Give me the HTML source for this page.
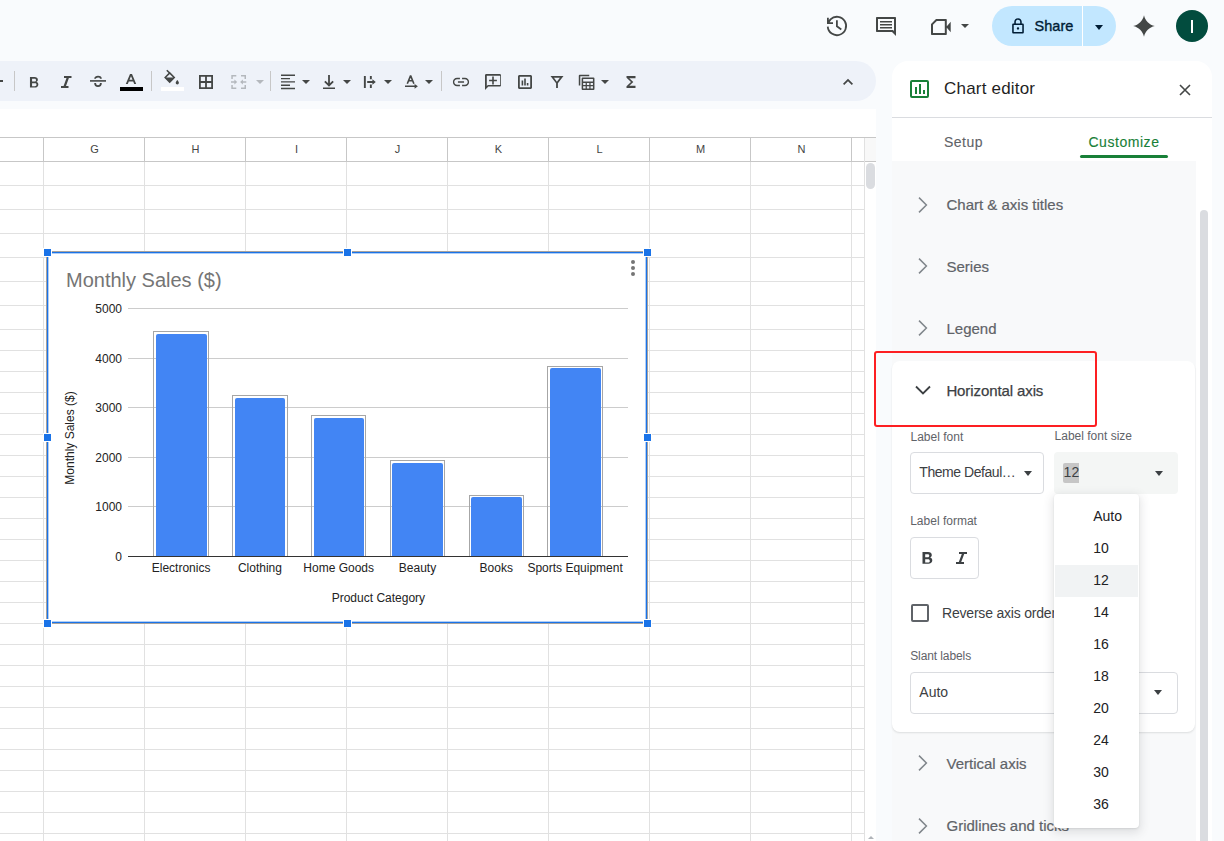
<!DOCTYPE html>
<html><head><meta charset="utf-8">
<style>
*{box-sizing:border-box;margin:0;padding:0}
html,body{width:1224px;height:841px;overflow:hidden;background:#f9fbfd;font-family:"Liberation Sans",sans-serif;position:relative}
.a{position:absolute}
svg.ic{position:absolute;fill:#444746}
.sep{position:absolute;top:71px;width:1px;height:20px;background:#c7c7c7}
.dd{position:absolute;width:0;height:0;border-left:4px solid transparent;border-right:4px solid transparent;border-top:4px solid #444746}
#toolbar{left:-30px;top:61px;width:906px;height:40px;background:#eef2f9;border-radius:20px}
#sheet{left:0;top:109px;width:876px;height:732px;background:#fff;overflow:hidden}
.hl{position:absolute;height:1px;background:#e1e1e1}
.vl{position:absolute;width:1px;background:#e1e1e1}
.colh{position:absolute;top:137px;height:24px;width:101px;font-size:11px;color:#444;text-align:center;line-height:25px}
#panel{left:892px;top:61px;width:320px;height:800px;background:#fff;border-radius:16px 16px 0 0;overflow:hidden}
.ct{position:absolute;font-size:12px;color:#222;white-space:nowrap;line-height:14px}
.acc{position:absolute;left:946px;font-size:15px;color:#5f6368;white-space:nowrap;line-height:18px}
.chev{position:absolute;left:912px;fill:#80868b}
.lbl{position:absolute;font-size:12px;color:#5f6368;white-space:nowrap;line-height:14px}
.mi{position:absolute;left:1093px;font-size:14px;color:#202124;white-space:nowrap;line-height:16px}
</style></head>
<body>
<div id="sheet" class="a"></div>
<div class="hl" style="left:0;top:137px;width:876px;background:#c7c7c7"></div>
<div class="hl" style="left:0;top:161px;width:876px;background:#c7c7c7"></div>
<div class="vl" style="left:43px;top:138px;height:23px;background:#c7c7c7"></div>
<div class="vl" style="left:144px;top:138px;height:23px;background:#c7c7c7"></div>
<div class="vl" style="left:245px;top:138px;height:23px;background:#c7c7c7"></div>
<div class="vl" style="left:346px;top:138px;height:23px;background:#c7c7c7"></div>
<div class="vl" style="left:447px;top:138px;height:23px;background:#c7c7c7"></div>
<div class="vl" style="left:548px;top:138px;height:23px;background:#c7c7c7"></div>
<div class="vl" style="left:649px;top:138px;height:23px;background:#c7c7c7"></div>
<div class="vl" style="left:750px;top:138px;height:23px;background:#c7c7c7"></div>
<div class="vl" style="left:851px;top:138px;height:23px;background:#c7c7c7"></div>
<div class="a" style="left:865px;top:138px;width:11px;height:23px;background:#f8f8f8"></div>
<div class="vl" style="left:864px;top:138px;height:703px;background:#e1e1e1"></div>
<div class="hl" style="left:0;top:185px;width:864px"></div>
<div class="hl" style="left:0;top:209px;width:864px"></div>
<div class="hl" style="left:0;top:233px;width:864px"></div>
<div class="hl" style="left:0;top:257px;width:864px"></div>
<div class="hl" style="left:0;top:281px;width:864px"></div>
<div class="hl" style="left:0;top:305px;width:864px"></div>
<div class="hl" style="left:0;top:329px;width:864px"></div>
<div class="hl" style="left:0;top:350px;width:864px"></div>
<div class="hl" style="left:0;top:371px;width:864px"></div>
<div class="hl" style="left:0;top:392px;width:864px"></div>
<div class="hl" style="left:0;top:413px;width:864px"></div>
<div class="hl" style="left:0;top:434px;width:864px"></div>
<div class="hl" style="left:0;top:455px;width:864px"></div>
<div class="hl" style="left:0;top:476px;width:864px"></div>
<div class="hl" style="left:0;top:497px;width:864px"></div>
<div class="hl" style="left:0;top:518px;width:864px"></div>
<div class="hl" style="left:0;top:539px;width:864px"></div>
<div class="hl" style="left:0;top:560px;width:864px"></div>
<div class="hl" style="left:0;top:581px;width:864px"></div>
<div class="hl" style="left:0;top:602px;width:864px"></div>
<div class="hl" style="left:0;top:623px;width:864px"></div>
<div class="hl" style="left:0;top:644px;width:864px"></div>
<div class="hl" style="left:0;top:665px;width:864px"></div>
<div class="hl" style="left:0;top:686px;width:864px"></div>
<div class="hl" style="left:0;top:707px;width:864px"></div>
<div class="hl" style="left:0;top:728px;width:864px"></div>
<div class="hl" style="left:0;top:749px;width:864px"></div>
<div class="hl" style="left:0;top:770px;width:864px"></div>
<div class="hl" style="left:0;top:791px;width:864px"></div>
<div class="hl" style="left:0;top:812px;width:864px"></div>
<div class="hl" style="left:0;top:833px;width:864px"></div>
<div class="vl" style="left:43px;top:162px;height:679px"></div>
<div class="vl" style="left:144px;top:162px;height:679px"></div>
<div class="vl" style="left:245px;top:162px;height:679px"></div>
<div class="vl" style="left:346px;top:162px;height:679px"></div>
<div class="vl" style="left:447px;top:162px;height:679px"></div>
<div class="vl" style="left:548px;top:162px;height:679px"></div>
<div class="vl" style="left:649px;top:162px;height:679px"></div>
<div class="vl" style="left:750px;top:162px;height:679px"></div>
<div class="vl" style="left:851px;top:162px;height:679px"></div>
<div class="colh" style="left:44px">G</div>
<div class="colh" style="left:145px">H</div>
<div class="colh" style="left:246px">I</div>
<div class="colh" style="left:347px">J</div>
<div class="colh" style="left:448px">K</div>
<div class="colh" style="left:549px">L</div>
<div class="colh" style="left:650px">M</div>
<div class="colh" style="left:751px">N</div>
<div class="a" style="left:866px;top:163px;width:9px;height:26px;border-radius:5px;background:#dadce0"></div>
<div class="dd" style="left:867.5px;top:836px;border-top:none;border-bottom:3.5px solid #b0b4b9;border-left-width:3px;border-right-width:3px"></div>
<!-- top bar icons -->
<svg class="ic" style="left:825px;top:14px" width="24" height="24" viewBox="0 0 24 24"><path fill="none" stroke="#444746" stroke-width="1.8" d="M2.75 12.6A9.2 9.2 0 1 0 5.5 5.4L3.2 8.6M2.9 3.8V9.1h5.1M11.9 6.2v6.1l4.4 3.1"/></svg>
<svg class="ic" style="left:874px;top:14px" width="24" height="24" viewBox="0 0 24 24"><path d="M3 3h18c.6 0 1 .4 1 1v18l-4-4H3c-.6 0-1-.4-1-1V4c0-.6.4-1 1-1zm1 2v11h15l1 1V5zM6 7h12v1.6H6zm0 3h12v1.6H6zm0 3h12v1.6H6z"/></svg>
<svg class="ic" style="left:929px;top:14px" width="24" height="24" viewBox="0 0 24 24"><path d="M7 5h9.8c.6 0 1 .4 1 1v14c0 .6-.4 1-1 1H3c-.6 0-1-.4-1-1V10zm.8 2L4 10.8V19h11.8V7zM17.2 13l4.5-5.2v10.4z"/></svg>
<div class="dd" style="left:961px;top:24px;border-left-width:4px;border-right-width:4px;border-top-width:4px"></div>
<div class="a" style="left:992px;top:6px;width:124px;height:40px;border-radius:20px;background:#c2e7ff"></div>
<div class="a" style="left:1082px;top:6px;width:1px;height:40px;background:#fff"></div>
<svg class="ic" style="left:1008px;top:14px;fill:#001d35" width="20" height="24" viewBox="0 0 20 24"><path d="M10 3.5c-2.5 0-4.3 1.9-4.3 4.3V10H4.8c-.9 0-1.5.6-1.5 1.5v9c0 .9.6 1.5 1.5 1.5h10.4c.9 0 1.5-.6 1.5-1.5v-9c0-.9-.6-1.5-1.5-1.5h-.9V7.8C14.3 5.4 12.5 3.5 10 3.5zm0 1.8c1.4 0 2.5 1.1 2.5 2.5V10h-5V7.8c0-1.4 1.1-2.5 2.5-2.5zM5.1 11.8h9.8v8.4H5.1zM10 14.6a1.4 1.4 0 1 0 0 2.8 1.4 1.4 0 0 0 0-2.8z" transform="translate(1.3,1.4) scale(0.87,0.82)"/></svg>
<div class="a" style="left:1034.5px;top:18px;font-size:14.5px;color:#001d35;line-height:17px;letter-spacing:0.05px;-webkit-text-stroke:0.35px #001d35">Share</div>
<div class="dd" style="left:1095px;top:24.6px;border-top-color:#001d35;border-left-width:4.5px;border-right-width:4.5px;border-top-width:5px"></div>
<svg class="ic" style="left:1133px;top:15px" width="22" height="22" viewBox="0 0 22 22"><path d="M11 0.2C12.1 5.6 16.4 9.9 21.8 11 16.4 12.1 12.1 16.4 11 21.8 9.9 16.4 5.6 12.1 0.2 11 5.6 9.9 9.9 5.6 11 0.2z"/></svg>
<div class="a" style="left:1176px;top:10px;width:32px;height:32px;border-radius:16px;background:#024c3e"></div>
<div class="a" style="left:1190.5px;top:20px;width:2.2px;height:13px;background:#fff"></div>

<!-- toolbar -->
<div id="toolbar" class="a"></div>
<div class="a" style="left:0;top:80px;width:3px;height:2px;background:#444746"></div>
<div class="sep" style="left:14px"></div>
<svg class="ic" style="left:24px;top:70px" width="20" height="24" viewBox="0 0 20 24"><path transform="translate(0.9,1) scale(0.92)" d="M5.5 6.5h5c2.2 0 3.6 1.2 3.6 2.9 0 1.1-.6 2-1.6 2.4 1.3.4 2.1 1.4 2.1 2.8 0 2-1.5 3.4-3.9 3.4H5.5zm2.3 2v3h2.7c1 0 1.6-.6 1.6-1.5s-.6-1.5-1.6-1.5zm0 4.9v3.1H10.8c1.1 0 1.8-.6 1.8-1.6s-.7-1.5-1.8-1.5z"/></svg>
<svg class="ic" style="left:56px;top:70px" width="20" height="24" viewBox="0 0 20 24"><path d="M8 6h7.5v2h-2.6l-2.9 8h2.5v2H5v-2h2.6l2.9-8H8z"/></svg>
<svg class="ic" style="left:88px;top:70px" width="20" height="24" viewBox="0 0 20 24"><path fill="none" stroke="#444746" stroke-width="1.8" d="M7.1 8.7c0-1.3 1.3-2.1 2.9-2.1s2.9.8 2.9 2.1M7.1 13c0 1.9 1.3 3.1 2.9 3.1s2.9-1.2 2.9-3.1"/><rect x="2" y="10.1" width="16" height="1.6"/></svg>
<svg class="ic" style="left:119px;top:70px" width="24" height="24" viewBox="0 0 24 24"><path d="M11 4h2l4.2 10h-2l-1-2.5H9.8L8.8 14h-2zm-.5 5.8h3L12 6.3z"/></svg>
<div class="a" style="left:120px;top:87px;width:23px;height:4px;background:#000"></div>
<div class="sep" style="left:151px"></div>
<svg class="ic" style="left:161px;top:68px" width="24" height="20" viewBox="0 0 24 20"><path fill="none" stroke="#444746" stroke-width="1.6" d="M5.8 2.2l3.3 3.3M4.2 9.5L8.7 5l4.5 4.5L8.7 14z"/><path d="M4 9.5h9.4L8.7 14.3z"/><path d="M16.3 12s-1.6 1.8-1.6 2.8a1.6 1.6 0 0 0 3.2 0c0-1-1.6-2.8-1.6-2.8z"/></svg>
<div class="a" style="left:161px;top:87px;width:23px;height:4px;background:#fff"></div>
<svg class="ic" style="left:196px;top:72px" width="20" height="20" viewBox="0 0 20 20"><path d="M3 3h14v14H3zm1.8 1.8v4.3h4.3V4.8zm6.1 0v4.3h4.3V4.8zM4.8 10.9v4.3h4.3v-4.3zm6.1 0v4.3h4.3v-4.3z"/></svg>
<svg class="ic" style="left:229px;top:72px;fill:#b4b8bd" width="20" height="20" viewBox="0 0 20 20"><path d="M2.3 3h5v1.5H3.8V7H2.3zM2.3 17h5v-1.5H3.8V13H2.3zM2 9.3h3.4V7.4l2.8 2.6-2.8 2.6v-1.9H2zM17 3h-5v1.5h3.5V7H17zM17 17h-5v-1.5h3.5V13H17zM17.3 9.3h-3.4V7.4L11.1 10l2.8 2.6v-1.9h3.4z"/></svg>
<div class="dd" style="left:256px;top:80px;border-top-color:#b4b8bd"></div>
<div class="sep" style="left:270px"></div>
<svg class="ic" style="left:279px;top:72px" width="18" height="20" viewBox="0 0 18 20"><path d="M2 2.6h14V4H2zm0 3.3h9v1.4H2zm0 3.3h14v1.4H2zm0 3.3h9v1.4H2zm0 3.3h14v1.4H2z"/></svg>
<div class="dd" style="left:302px;top:80px"></div>
<svg class="ic" style="left:319px;top:72px" width="20" height="20" viewBox="0 0 20 20"><path d="M9.1 3h1.8v8.3l2.6-2.6 1.3 1.2L10 14.7 5.2 9.9l1.3-1.2 2.6 2.6zM4 15.4h12v1.6H4z"/></svg>
<div class="dd" style="left:343px;top:80px"></div>
<svg class="ic" style="left:360px;top:72px" width="20" height="20" viewBox="0 0 20 20"><path d="M3.9 4h1.9v11.9H3.9zM9.9 4h1.9v3.2H9.9zM9.9 12.4h1.9v3.5H9.9zM7.2 9.1h6v1.9h-6zM12.4 7.2l3.4 2.8-3.4 2.8z"/></svg>
<div class="dd" style="left:384px;top:80px"></div>
<svg class="ic" style="left:402px;top:72px" width="20" height="20" viewBox="0 0 20 20"><path fill="none" stroke="#444746" stroke-width="1.6" stroke-linejoin="bevel" d="M5.3 11.8L8.6 3.6l3.3 8.2M6.4 8.8h4.4"/><path d="M3 13.6h10.5v1.5H3zM12.6 11.9l3.3 2.45-3.3 2.45z"/></svg>
<div class="dd" style="left:425px;top:80px"></div>
<div class="sep" style="left:441px"></div>
<svg class="ic" style="left:451px;top:72px" width="20" height="20" viewBox="0 0 20 20"><path transform="translate(1,1) scale(0.9)" d="M2.5 10c0-1.7 1.4-3.1 3.1-3.1h3.2V5.3H5.6C3 5.3 1 7.4 1 10s2 4.7 4.6 4.7h3.2v-1.6H5.6c-1.7 0-3.1-1.4-3.1-3.1zm4.1.8h6.8V9.2H6.6zm7.8-5.5h-3.2v1.6h3.2c1.7 0 3.1 1.4 3.1 3.1s-1.4 3.1-3.1 3.1h-3.2v1.6h3.2C17 14.7 19 12.6 19 10s-2-4.7-4.6-4.7z"/></svg>
<svg class="ic" style="left:483px;top:71px" width="20" height="20" viewBox="0 0 20 20"><path d="M3.3 3h13.4c.7 0 1.3.6 1.3 1.3v10c0 .7-.6 1.3-1.3 1.3H5.4L2 18.9V4.3C2 3.6 2.6 3 3.3 3zm.5 1.8v10.4l.9-1.2h12.5V4.8zM9.2 5.6h1.6v3.1h3.1v1.6h-3.1v3.1H9.2v-3.1H6.1V8.7h3.1z"/></svg>
<svg class="ic" style="left:515px;top:72px" width="20" height="20" viewBox="0 0 20 20"><path d="M4.5 3h11c.8 0 1.5.7 1.5 1.5v11c0 .8-.7 1.5-1.5 1.5h-11c-.8 0-1.5-.7-1.5-1.5v-11C3 3.7 3.7 3 4.5 3zm.3 1.8v10.4h10.4V4.8zM6.6 8.5h1.6v5H6.6zm2.6-1.9h1.6v6.9H9.2zm2.6 4.3h1.6v2.6h-1.6z"/></svg>
<svg class="ic" style="left:547px;top:72px" width="20" height="20" viewBox="0 0 20 20"><path d="M3.5 4h13l-5.6 7.3V16H9.1v-4.7zm3.5 1.8 2.9 3.9 3-3.9z"/></svg>
<svg class="ic" style="left:576px;top:71px" width="22" height="22" viewBox="0 0 22 22"><path transform="translate(0.6,0.4) scale(0.95)" d="M3.3 3.5h10v1.6H3.9v9.8H2.3V4.5c0-.6.4-1 1-1zM6.3 6.5h11.5c.6 0 1 .4 1 1v11c0 .6-.4 1-1 1H6.3c-.6 0-1-.4-1-1v-11c0-.6.4-1 1-1zm.6 1.6v2.6h10.3V8.1zm0 4.1v2.1h2.6v-2.1zm3.9 0v2.1h2.6v-2.1zm3.9 0v2.1h2.5v-2.1zM6.9 15.7v2.3h2.6v-2.3zm3.9 0v2.3h2.6v-2.3zm3.9 0v2.3h2.5v-2.3z"/></svg>
<div class="dd" style="left:601px;top:80px"></div>
<svg class="ic" style="left:621px;top:72px" width="20" height="20" viewBox="0 0 20 20"><path d="M5.5 4h9v2.3h-6.2l4 3.7-4 3.7h6.2V16h-9v-1.8L10 10 5.5 5.8z"/></svg>
<svg class="ic" style="left:838px;top:72px" width="20" height="20" viewBox="0 0 20 20"><path d="M10 6.8l-5 5 1.2 1.2 3.8-3.8 3.8 3.8 1.2-1.2z"/></svg>
<div class="a" style="left:47px;top:252px;width:601px;height:371px;background:#fff"></div>
<div class="ct" style="left:66px;top:270px;font-size:20px;line-height:20px;color:#757575">Monthly Sales ($)</div>
<div class="a" style="left:128px;top:308px;width:500px;height:1px;background:#cccccc"></div>
<div class="ct" style="left:62px;width:60px;text-align:right;top:303.34px;line-height:12px">5000</div>
<div class="a" style="left:128px;top:358px;width:500px;height:1px;background:#cccccc"></div>
<div class="ct" style="left:62px;width:60px;text-align:right;top:353.34px;line-height:12px">4000</div>
<div class="a" style="left:128px;top:407px;width:500px;height:1px;background:#cccccc"></div>
<div class="ct" style="left:62px;width:60px;text-align:right;top:402.34px;line-height:12px">3000</div>
<div class="a" style="left:128px;top:457px;width:500px;height:1px;background:#cccccc"></div>
<div class="ct" style="left:62px;width:60px;text-align:right;top:452.34px;line-height:12px">2000</div>
<div class="a" style="left:128px;top:506px;width:500px;height:1px;background:#cccccc"></div>
<div class="ct" style="left:62px;width:60px;text-align:right;top:501.34px;line-height:12px">1000</div>
<div class="ct" style="left:62px;width:60px;text-align:right;top:550.84px;line-height:12px">0</div>
<div class="a" style="left:153.40px;top:331.00px;width:55.4px;height:225.00px;border:1px solid #a6a6a6;border-bottom:none"></div>
<div class="a" style="left:156.00px;top:333.60px;width:50.7px;height:222.40px;background:#4285f4;border-radius:2px 2px 0 0"></div>
<div class="ct" style="left:121.10px;width:120px;text-align:center;top:561.84px;line-height:12px">Electronics</div>
<div class="a" style="left:232.20px;top:395.48px;width:55.4px;height:160.52px;border:1px solid #a6a6a6;border-bottom:none"></div>
<div class="a" style="left:234.80px;top:398.08px;width:50.7px;height:157.92px;background:#4285f4;border-radius:2px 2px 0 0"></div>
<div class="ct" style="left:199.90px;width:120px;text-align:center;top:561.84px;line-height:12px">Clothing</div>
<div class="a" style="left:311.00px;top:415.32px;width:55.4px;height:140.68px;border:1px solid #a6a6a6;border-bottom:none"></div>
<div class="a" style="left:313.60px;top:417.92px;width:50.7px;height:138.08px;background:#4285f4;border-radius:2px 2px 0 0"></div>
<div class="ct" style="left:278.70px;width:120px;text-align:center;top:561.84px;line-height:12px">Home Goods</div>
<div class="a" style="left:389.80px;top:459.96px;width:55.4px;height:96.04px;border:1px solid #a6a6a6;border-bottom:none"></div>
<div class="a" style="left:392.40px;top:462.56px;width:50.7px;height:93.44px;background:#4285f4;border-radius:2px 2px 0 0"></div>
<div class="ct" style="left:357.50px;width:120px;text-align:center;top:561.84px;line-height:12px">Beauty</div>
<div class="a" style="left:468.60px;top:494.68px;width:55.4px;height:61.32px;border:1px solid #a6a6a6;border-bottom:none"></div>
<div class="a" style="left:471.20px;top:497.28px;width:50.7px;height:58.72px;background:#4285f4;border-radius:2px 2px 0 0"></div>
<div class="ct" style="left:436.30px;width:120px;text-align:center;top:561.84px;line-height:12px">Books</div>
<div class="a" style="left:547.40px;top:365.72px;width:55.4px;height:190.28px;border:1px solid #a6a6a6;border-bottom:none"></div>
<div class="a" style="left:550.00px;top:368.32px;width:50.7px;height:187.68px;background:#4285f4;border-radius:2px 2px 0 0"></div>
<div class="ct" style="left:515.10px;width:120px;text-align:center;top:561.84px;line-height:12px">Sports Equipment</div>
<div class="a" style="left:128px;top:556px;width:500px;height:1px;background:#333"></div>
<div class="ct" style="left:318.4px;width:120px;text-align:center;top:591.84px;line-height:12px">Product Category</div>
<div class="ct" style="left:10.1px;top:432.4px;width:120px;text-align:center;line-height:12px;transform:rotate(-90deg)">Monthly Sales ($)</div>
<div class="a" style="left:631px;top:260px;width:4px;height:4px;border-radius:2px;background:#757575"></div>
<div class="a" style="left:631px;top:266px;width:4px;height:4px;border-radius:2px;background:#757575"></div>
<div class="a" style="left:631px;top:272px;width:4px;height:4px;border-radius:2px;background:#757575"></div>
<div class="a" style="left:47px;top:251px;width:601px;height:1px;background:#a8a29c"></div>
<div class="a" style="left:47px;top:252px;width:601px;height:1px;background:#1a73e8"></div>
<div class="a" style="left:47px;top:253px;width:601px;height:1px;background:rgba(26,115,232,.35)"></div>
<div class="a" style="left:47px;top:623px;width:601px;height:1px;background:#a8a29c"></div>
<div class="a" style="left:47px;top:622px;width:601px;height:1px;background:#1a73e8"></div>
<div class="a" style="left:47px;top:621px;width:601px;height:1px;background:rgba(26,115,232,.35)"></div>
<div class="a" style="left:46px;top:252px;width:1px;height:371px;background:#a8a29c"></div>
<div class="a" style="left:47px;top:252px;width:1px;height:371px;background:#1a73e8"></div>
<div class="a" style="left:48px;top:252px;width:1px;height:371px;background:rgba(26,115,232,.35)"></div>
<div class="a" style="left:647px;top:252px;width:1px;height:371px;background:#a8a29c"></div>
<div class="a" style="left:646px;top:252px;width:1px;height:371px;background:#1a73e8"></div>
<div class="a" style="left:645px;top:252px;width:1px;height:371px;background:rgba(26,115,232,.35)"></div>
<div class="a" style="left:44px;top:249px;width:7px;height:7px;background:#1a73e8;box-shadow:0 0 0 1px #fff"></div>
<div class="a" style="left:44px;top:434px;width:7px;height:7px;background:#1a73e8;box-shadow:0 0 0 1px #fff"></div>
<div class="a" style="left:44px;top:620px;width:7px;height:7px;background:#1a73e8;box-shadow:0 0 0 1px #fff"></div>
<div class="a" style="left:344px;top:249px;width:7px;height:7px;background:#1a73e8;box-shadow:0 0 0 1px #fff"></div>
<div class="a" style="left:344px;top:620px;width:7px;height:7px;background:#1a73e8;box-shadow:0 0 0 1px #fff"></div>
<div class="a" style="left:644px;top:249px;width:7px;height:7px;background:#1a73e8;box-shadow:0 0 0 1px #fff"></div>
<div class="a" style="left:644px;top:434px;width:7px;height:7px;background:#1a73e8;box-shadow:0 0 0 1px #fff"></div>
<div class="a" style="left:644px;top:620px;width:7px;height:7px;background:#1a73e8;box-shadow:0 0 0 1px #fff"></div>
<div id="panel" class="a"></div>
<div class="a" style="left:910px;top:80px;width:19px;height:18px;border:2px solid #188038;border-radius:2px"></div>
<div class="a" style="left:915px;top:87px;width:2px;height:7px;background:#188038"></div>
<div class="a" style="left:919px;top:84px;width:2px;height:10px;background:#188038"></div>
<div class="a" style="left:923px;top:90px;width:2px;height:4px;background:#188038"></div>
<div class="a" style="left:944px;top:79.91px;font-size:17px;line-height:17px;color:#1f1f1f;white-space:nowrap;letter-spacing:0.2px">Chart editor</div>
<svg class="ic" style="left:1177px;top:82px" width="16" height="16" viewBox="0 0 16 16"><path fill="none" stroke="#444746" stroke-width="1.6" d="M3 3l10 10M13 3L3 13"/></svg>
<div class="a" style="left:892px;top:117px;width:320px;height:1px;background:#dadce0"></div>
<div class="a" style="left:944px;top:135.15px;font-size:14px;line-height:14px;color:#5f6368;white-space:nowrap;letter-spacing:0.5px;-webkit-text-stroke:0.12px #5f6368">Setup</div>
<div class="a" style="left:1088.4px;top:135.15px;font-size:14px;line-height:14px;color:#188038;white-space:nowrap;letter-spacing:0.55px;-webkit-text-stroke:0.12px #188038">Customize</div>
<div class="a" style="left:1080px;top:155px;width:88px;height:3px;background:#188038;border-radius:2px"></div>
<div class="a" style="left:892px;top:161px;width:304px;height:680px;background:#f8f9fa"></div>
<div class="a" style="left:1200px;top:210px;width:8px;height:640px;background:#dadce0;border-radius:4px"></div>
<svg class="chev" style="left:913.5px;top:196.5px" width="16" height="16" viewBox="0 0 16 16"><path fill="none" stroke="#80868b" stroke-width="1.5" d="M5 0.6l7.4 7.4-7.4 7.4"/></svg>
<div class="a" style="left:946.5px;top:197.10px;font-size:15px;line-height:15px;color:#5f6368;white-space:nowrap;-webkit-text-stroke:0.2px #5f6368">Chart &amp; axis titles</div>
<svg class="chev" style="left:913.5px;top:258.0px" width="16" height="16" viewBox="0 0 16 16"><path fill="none" stroke="#80868b" stroke-width="1.5" d="M5 0.6l7.4 7.4-7.4 7.4"/></svg>
<div class="a" style="left:946.5px;top:258.60px;font-size:15px;line-height:15px;color:#5f6368;white-space:nowrap;-webkit-text-stroke:0.2px #5f6368">Series</div>
<svg class="chev" style="left:913.5px;top:319.9px" width="16" height="16" viewBox="0 0 16 16"><path fill="none" stroke="#80868b" stroke-width="1.5" d="M5 0.6l7.4 7.4-7.4 7.4"/></svg>
<div class="a" style="left:946.5px;top:320.50px;font-size:15px;line-height:15px;color:#5f6368;white-space:nowrap;-webkit-text-stroke:0.2px #5f6368">Legend</div>
<svg class="chev" style="left:913.5px;top:755.4000000000001px" width="16" height="16" viewBox="0 0 16 16"><path fill="none" stroke="#80868b" stroke-width="1.5" d="M5 0.6l7.4 7.4-7.4 7.4"/></svg>
<div class="a" style="left:946.5px;top:756.00px;font-size:15px;line-height:15px;color:#5f6368;white-space:nowrap;-webkit-text-stroke:0.2px #5f6368">Vertical axis</div>
<svg class="chev" style="left:913.5px;top:817.7px" width="16" height="16" viewBox="0 0 16 16"><path fill="none" stroke="#80868b" stroke-width="1.5" d="M5 0.6l7.4 7.4-7.4 7.4"/></svg>
<div class="a" style="left:946.5px;top:818.30px;font-size:15px;line-height:15px;color:#5f6368;white-space:nowrap;-webkit-text-stroke:0.2px #5f6368">Gridlines and ticks</div>
<div class="a" style="left:892px;top:360.5px;width:303px;height:371.5px;background:#fff;border-radius:8px;box-shadow:0 1.5px 2px -0.5px rgba(60,64,67,.14)"></div>
<svg class="chev" style="left:915px;top:382px" width="16" height="16" viewBox="0 0 16 16"><path fill="none" stroke="#3c4043" stroke-width="1.8" d="M1 4.5l7 7 7-7"/></svg>
<div class="a" style="left:946.4px;top:382.90px;font-size:15px;line-height:15px;color:#3c4043;white-space:nowrap;letter-spacing:-0.1px;-webkit-text-stroke:0.25px #3c4043">Horizontal axis</div>
<div class="a" style="left:874px;top:351px;width:223px;height:76px;border:2px solid #fd1f22;border-radius:3px"></div>
<div class="a" style="left:910.5px;top:430.84px;font-size:12px;line-height:12px;color:#5f6368;white-space:nowrap;">Label font</div>
<div class="a" style="left:910px;top:452px;width:134px;height:42px;border:1px solid #dadce0;border-radius:4px"></div>
<div class="a" style="left:919.3px;top:465.15px;font-size:14px;line-height:14px;color:#3c4043;white-space:nowrap;letter-spacing:-0.45px">Theme Defaul…</div>
<div class="dd" style="left:1024px;top:471px;border-top-color:#3c4043;border-top-width:5px"></div>
<div class="a" style="left:1054.6px;top:430.14px;font-size:12px;line-height:12px;color:#5f6368;white-space:nowrap;">Label font size</div>
<div class="a" style="left:1054px;top:452px;width:124px;height:42px;background:#f4f6f5;border-radius:4px"></div>
<div class="a" style="left:1063px;top:463px;width:16px;height:20px;background:#c6c6c6;border-radius:2px 0 0 2px"></div>
<div class="a" style="left:1063.6px;top:465.15px;font-size:14px;line-height:14px;color:#3c4043;white-space:nowrap;">12</div>
<div class="dd" style="left:1155px;top:471px;border-top-color:#3c4043;border-top-width:5px"></div>
<div class="a" style="left:910.2px;top:515.24px;font-size:12px;line-height:12px;color:#5f6368;white-space:nowrap;">Label format</div>
<div class="a" style="left:910px;top:537px;width:69px;height:42px;border:1px solid #dadce0;border-radius:4px"></div>
<svg class="ic" style="left:918px;top:548px;fill:#3c4043" width="20" height="20" viewBox="0 0 20 20"><path d="M4.5 4h5.6c2.3 0 3.7 1.2 3.7 3 0 1.1-.6 2-1.6 2.4 1.3.4 2.1 1.5 2.1 2.9 0 2.1-1.6 3.5-4 3.5H4.5zm2.7 2.2v3h2.6c.9 0 1.5-.6 1.5-1.5s-.6-1.5-1.5-1.5zm0 5.1v3.2H10c1.1 0 1.8-.6 1.8-1.6s-.7-1.6-1.8-1.6z"/></svg>
<svg class="ic" style="left:951px;top:548px;fill:#3c4043" width="20" height="20" viewBox="0 0 20 20"><path d="M8 4h8v2h-2.8l-3 8H13v2H5v-2h2.8l3-8H8z"/></svg>
<div class="a" style="left:911px;top:604px;width:18px;height:18px;border:2px solid #5f6368;border-radius:2px"></div>
<div class="a" style="left:942px;top:606.35px;font-size:14px;line-height:14px;color:#3c4043;white-space:nowrap;letter-spacing:-0.2px">Reverse axis order</div>
<div class="a" style="left:910.2px;top:649.84px;font-size:12px;line-height:12px;color:#5f6368;white-space:nowrap;letter-spacing:-0.1px">Slant labels</div>
<div class="a" style="left:910px;top:672px;width:268px;height:42px;border:1px solid #dadce0;border-radius:4px"></div>
<div class="a" style="left:919.3px;top:684.85px;font-size:14px;line-height:14px;color:#3c4043;white-space:nowrap;">Auto</div>
<div class="dd" style="left:1154px;top:690px;border-top-color:#3c4043;border-top-width:5px"></div>
<div class="a" style="left:1054px;top:494px;width:85px;height:334px;background:#fff;border-radius:4px;box-shadow:0 3px 10px 2px rgba(60,64,67,.13),0 1px 2px rgba(60,64,67,.12)"></div>
<div class="a" style="left:1055px;top:565px;width:83px;height:32px;background:#f1f3f4"></div>
<div class="a" style="left:1093.2px;top:508.75px;font-size:14px;line-height:14px;color:#202124;white-space:nowrap;">Auto</div>
<div class="a" style="left:1093.2px;top:540.75px;font-size:14px;line-height:14px;color:#202124;white-space:nowrap;">10</div>
<div class="a" style="left:1093.2px;top:572.75px;font-size:14px;line-height:14px;color:#202124;white-space:nowrap;">12</div>
<div class="a" style="left:1093.2px;top:604.75px;font-size:14px;line-height:14px;color:#202124;white-space:nowrap;">14</div>
<div class="a" style="left:1093.2px;top:636.75px;font-size:14px;line-height:14px;color:#202124;white-space:nowrap;">16</div>
<div class="a" style="left:1093.2px;top:668.75px;font-size:14px;line-height:14px;color:#202124;white-space:nowrap;">18</div>
<div class="a" style="left:1093.2px;top:700.75px;font-size:14px;line-height:14px;color:#202124;white-space:nowrap;">20</div>
<div class="a" style="left:1093.2px;top:732.75px;font-size:14px;line-height:14px;color:#202124;white-space:nowrap;">24</div>
<div class="a" style="left:1093.2px;top:764.75px;font-size:14px;line-height:14px;color:#202124;white-space:nowrap;">30</div>
<div class="a" style="left:1093.2px;top:796.75px;font-size:14px;line-height:14px;color:#202124;white-space:nowrap;">36</div>
</body></html>
